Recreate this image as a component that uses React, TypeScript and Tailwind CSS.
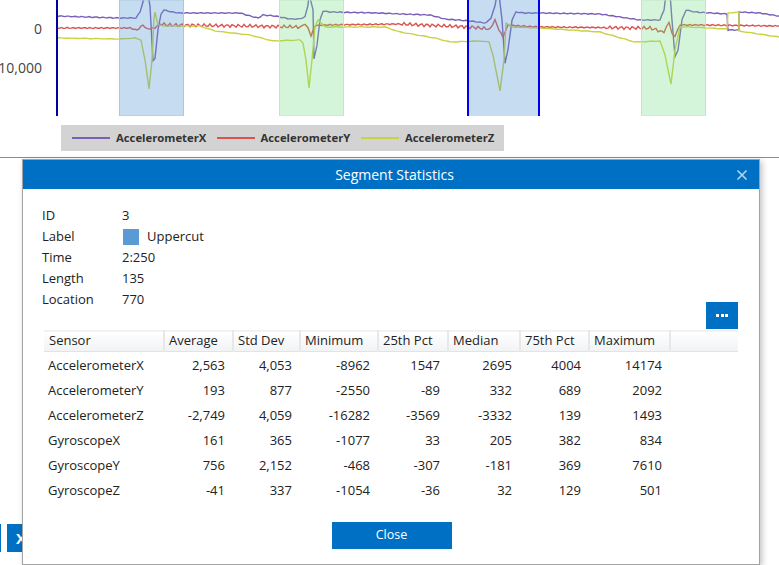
import { X } from 'lucide-react'

type Pt = [number, number]

const purple: Pt[] = [
  [57, 16], [119, 18], [136, 18], [140, 12], [143, 2], [144, -6], [148, -6], [150, 6], [153, 61], [155, 58], [158, 30],
  [161, 14], [164, 10], [172, 12], [180, 13], [200, 13], [240, 13], [250, 16], [258, 18], [263, 15], [275, 16],
  [290, 19], [299, 19], [305, 17], [308, 5], [309, -6], [313, 10], [314, 59], [317, 45], [320, 20], [323, 11], [330, 12], [380, 13],
  [400, 14], [430, 15], [445, 19], [470, 21], [486, 23], [491, 18], [495, 6], [497, -6], [499, -6], [502, 20], [505, 63],
  [508, 50], [512, 20], [516, 12], [525, 13], [540, 13], [600, 14], [640, 20], [660, 20], [664, 10], [666, -6], [670, -6],
  [672, 20], [675, 57], [678, 50], [682, 20], [686, 10], [695, 12], [727, 14], [728, 30], [739, 30], [739, 12], [760, 13], [779, 16],
]

const red: Pt[] = [
  [57, 28], [130, 28], [137, 30], [143, 25], [147, 29], [155, 28], [160, 24], [170, 25], [250, 26], [300, 27],
  [305, 24], [308, 28], [311, 36], [315, 26], [320, 25], [400, 24], [470, 27], [490, 29], [495, 20], [499, 30], [503, 37],
  [508, 25], [520, 26], [540, 27], [650, 28], [664, 32], [669, 22], [672, 34], [675, 36], [680, 25], [700, 25], [779, 26],
]

const yellow: Pt[] = [
  [57, 38], [120, 39], [135, 38], [141, 40], [145, 60], [149, 89], [152, 60], [154, 18], [155, 12], [158, 25], [165, 26],
  [200, 26], [215, 31], [250, 35], [273, 41], [300, 40], [303, 43], [306, 60], [309, 88], [312, 60], [315, 26], [318, 20],
  [325, 27], [385, 27], [400, 32], [435, 38], [450, 42], [480, 41], [489, 42], [493, 55], [500, 91], [504, 60], [506, 23],
  [512, 27], [540, 28], [600, 32], [635, 42], [660, 41], [665, 55], [671, 84], [675, 50], [680, 27], [690, 27], [727, 29],
  [728, 13], [739, 12], [739, 31], [779, 37],
]

// walks the anchors and adds a small wobble so the trace looks sampled
function tracePath(pts: Pt[], wobble: (x: number) => number) {
  const out: string[] = []
  for (let i = 0; i < pts.length - 1; i++) {
    const [x0, y0] = pts[i]
    const [x1, y1] = pts[i + 1]
    const steps = Math.max(1, Math.floor((x1 - x0) / 2))
    for (let s = 0; s < steps; s++) {
      const x = x0 + ((x1 - x0) * s) / steps
      const y = y0 + ((y1 - y0) * s) / steps
      out.push(`${x.toFixed(1)},${(y + wobble(x)).toFixed(1)}`)
    }
  }
  const last = pts[pts.length - 1]
  out.push(`${last[0]},${last[1]}`)
  return 'M' + out.join(' L')
}

const purpleWobble = (x: number) => Math.sin(x * 0.9) * 0.4
const yellowWobble = (x: number) => Math.sin(x * 0.5) * 0.2
const redWobble = (x: number) => {
  const inBusy = (x > 155 && x < 300) || (x > 400 && x < 490) || (x > 605 && x < 660)
  return Math.sin(x * 1.1) * (inBusy ? 1.6 : 0.6)
}

function Chart() {
  return (
    <svg width={779} height={116} className="block">
      <text x={42} y={34} textAnchor="end" fontSize={14} fill="#444444">0</text>
      <text x={42} y={73} textAnchor="end" fontSize={14} fill="#444444">-10,000</text>
      <path d={tracePath(purple, purpleWobble)} fill="none" stroke="#7a5fb8" strokeWidth={1.4} />
      <path d={tracePath(red, redWobble)} fill="none" stroke="#d9534f" strokeWidth={1.4} />
      <path d={tracePath(yellow, yellowWobble)} fill="none" stroke="#c9d23f" strokeWidth={1.4} />
      <rect x={119.5} y={0} width={64} height={116} fill="#5b9bd5" fillOpacity={0.35} stroke="#a9c8e0" />
      <rect x={279.5} y={0} width={64} height={116} fill="#70dd80" fillOpacity={0.3} stroke="#bfe8c8" />
      <rect x={468} y={0} width={71} height={116} fill="#5b9bd5" fillOpacity={0.35} />
      <rect x={641.5} y={0} width={64} height={116} fill="#70dd80" fillOpacity={0.3} stroke="#bfe8c8" />
      <rect x={467} y={0} width={2} height={116} fill="#0000ee" />
      <rect x={538} y={0} width={2} height={116} fill="#0000ee" />
      <rect x={56} y={0} width={2} height={116} fill="#00009c" />
    </svg>
  )
}

function LegendItem({ color, name }: { color: string; name: string }) {
  return (
    <div className="flex items-center gap-[6px]">
      <span className="block w-[38px] h-[2px]" style={{ backgroundColor: color }} />
      <span className="w-[89px] text-[11.3px] font-bold text-[#333333] whitespace-nowrap">{name}</span>
    </div>
  )
}

const stats = [
  ['AccelerometerX', '2,563', '4,053', '-8962', '1547', '2695', '4004', '14174'],
  ['AccelerometerY', '193', '877', '-2550', '-89', '332', '689', '2092'],
  ['AccelerometerZ', '-2,749', '4,059', '-16282', '-3569', '-3332', '139', '1493'],
  ['GyroscopeX', '161', '365', '-1077', '33', '205', '382', '834'],
  ['GyroscopeY', '756', '2,152', '-468', '-307', '-181', '369', '7610'],
  ['GyroscopeZ', '-41', '337', '-1054', '-36', '32', '129', '501'],
]

const headers = ['Sensor', 'Average', 'Std Dev', 'Minimum', '25th Pct', 'Median', '75th Pct', 'Maximum', '']

const info = [
  ['ID', '3'],
  ['Label', 'Uppercut'],
  ['Time', '2:250'],
  ['Length', '135'],
  ['Location', '770'],
]

function StatsTable() {
  return (
    <table className="table-fixed w-[694px] border-collapse text-[13px] text-[#222222]">
      <colgroup>
        <col className="w-[120px]" />
        <col className="w-[69px]" />
        <col className="w-[67px]" />
        <col className="w-[78px]" />
        <col className="w-[70px]" />
        <col className="w-[72px]" />
        <col className="w-[69px]" />
        <col className="w-[81px]" />
        <col />
      </colgroup>
      <thead>
        <tr className="h-[21px] bg-gradient-to-b from-white to-[#f2f3f5] border-t border-b border-t-[#f0f0f0] border-b-[#e3e3e3]">
          {headers.map((h, i) => (
            <th key={i} className="pl-[4px] first:pl-[5px] text-left font-normal border-r-2 border-r-[#e8e8e8] last:border-r-0 whitespace-nowrap">
              {h}
            </th>
          ))}
        </tr>
      </thead>
      <tbody className="[&>tr:not(:first-child)>td]:pt-[2px] [&>tr:first-child]:h-[26px] [&>tr:first-child>td]:pt-[1px]">
        {stats.map((row) => (
          <tr key={row[0]} className="h-[25px]">
            {row.map((v, i) =>
              i === 0 ? (
                <td key={i} className="pl-[4px]">{v}</td>
              ) : (
                <td key={i} className="pr-[8px] text-right">{v}</td>
              )
            )}
            <td />
          </tr>
        ))}
      </tbody>
    </table>
  )
}

function Dialog() {
  return (
    <div className="absolute left-[22px] top-[159px] w-[738px] h-[406px] bg-white border border-[#a3a3a3] shadow-[2px_2px_6px_rgba(0,0,0,0.25)] flex flex-col">
      <div className="relative h-[29px] shrink-0 bg-[#0070c4] flex items-center justify-center pl-[7px] text-white text-[14px]">
        Segment Statistics
        <X className="absolute right-[9px] top-[7px] w-[16px] h-[16px] text-[#b5d6f0]" strokeWidth={2.5} />
      </div>
      <div className="flex flex-col pl-[19px] pt-[16px] text-[13px] text-[#222222]">
        {info.map(([k, v]) => (
          <div key={k} className="flex items-center h-[21px]">
            <span className="w-[80px]">{k}</span>
            {k === 'Label' && <span className="w-[16px] h-[16px] ml-[1px] mr-[8px] bg-[#5b9bd5]" />}
            <span>{v}</span>
          </div>
        ))}
      </div>
      <div className="flex justify-end pr-[21px] -mt-[8px]">
        <button className="w-[32px] h-[27px] bg-[#0070c4] flex items-center justify-center gap-[1.5px]">
          <span className="w-[3px] h-[3px] bg-white" />
          <span className="w-[3px] h-[3px] bg-white" />
          <span className="w-[3px] h-[3px] bg-white" />
        </button>
      </div>
      <div className="pl-[21px] mt-[1px]">
        <StatsTable />
      </div>
      <div className="flex justify-center mt-[19px] pl-[1px]">
        <button className="w-[120px] h-[27px] bg-[#0070c4] text-white text-[12.5px]">Close</button>
      </div>
    </div>
  )
}

export default function App() {
  return (
    <div className="relative w-[779px] h-[565px] overflow-hidden bg-white font-['Open_Sans','Noto_Sans',sans-serif]">
      <div className="h-[158px] border-b border-[#6f93b8]">
        <Chart />
        <div className="mt-[9px] ml-[61px] w-[443px] h-[26px] bg-[#d3d3d3] flex items-center gap-[11.5px] pl-[11px]">
          <LegendItem color="#7a5fb8" name="AccelerometerX" />
          <LegendItem color="#d9534f" name="AccelerometerY" />
          <LegendItem color="#c9d23f" name="AccelerometerZ" />
        </div>
      </div>
      {/* buttons of the page behind the dialog */}
      <div className="flex mt-[366px] h-[28px]">
        <span className="w-px bg-[#0070c4]" />
        <span className="ml-[6px] w-[30px] bg-[#0070c4] pl-[9px] text-white font-bold text-[15px] leading-[28px]">X</span>
      </div>
      <Dialog />
    </div>
  )
}
